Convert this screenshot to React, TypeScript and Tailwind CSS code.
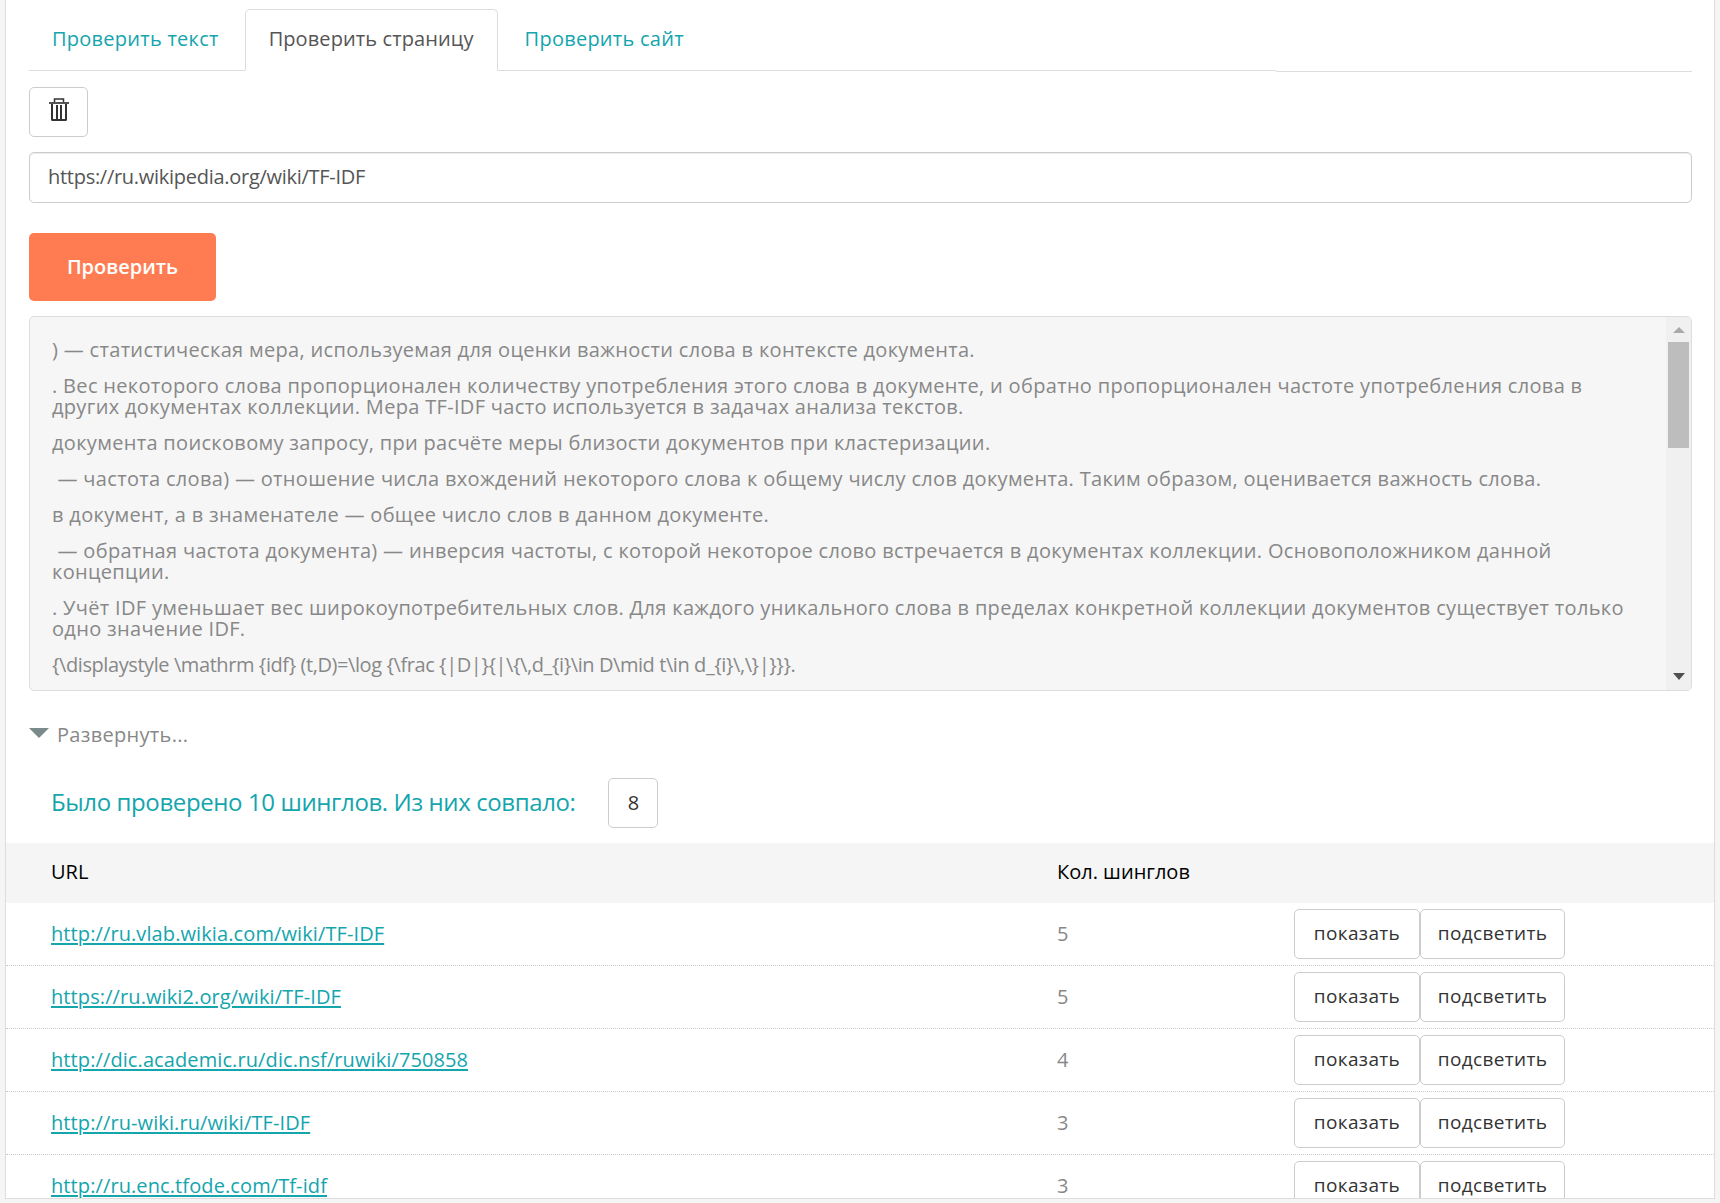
import React from 'react';

const font = "font-['Open_Sans','Liberation_Sans',sans-serif]";

const rows = [
  { url: 'http://ru.vlab.wikia.com/wiki/TF-IDF', count: 5 },
  { url: 'https://ru.wiki2.org/wiki/TF-IDF', count: 5 },
  { url: 'http://dic.academic.ru/dic.nsf/ruwiki/750858', count: 4 },
  { url: 'http://ru-wiki.ru/wiki/TF-IDF', count: 3 },
  { url: 'http://ru.enc.tfode.com/Tf-idf', count: 3 },
];

const paragraphs = [
  ') — статистическая мера, используемая для оценки важности слова в контексте документа.',
  '. Вес некоторого слова пропорционален количеству употребления этого слова в документе, и обратно пропорционален частоте употребления слова в других документах коллекции. Мера TF-IDF часто используется в задачах анализа текстов.',
  'документа поисковому запросу, при расчёте меры близости документов при кластеризации.',
  '\u00a0— частота слова) — отношение числа вхождений некоторого слова к общему числу слов документа. Таким образом, оценивается важность слова.',
  'в документ, а в знаменателе — общее число слов в данном документе.',
  '\u00a0— обратная частота документа) — инверсия частоты, с которой некоторое слово встречается в документах коллекции. Основоположником данной концепции.',
  '. Учёт IDF уменьшает вес широкоупотребительных слов. Для каждого уникального слова в пределах конкретной коллекции документов существует только одно значение IDF.',
];

const formula = '{\\displaystyle \\mathrm {idf} (t,D)=\\log {\\frac {|D|}{|\\{\\,d_{i}\\in D\\mid t\\in d_{i}\\,\\}|}}}.';

const TrashIcon = () => (
  <svg width="20" height="23" viewBox="0 0 20 23" fill="none" stroke="#333" strokeWidth="2">
    <path d="M0 5h20" stroke="#555" />
    <path d="M5.5 4V1h9v3" strokeWidth="1.5" />
    <path d="M3 6v15.5a.5.5 0 0 0 .5.5h13a.5.5 0 0 0 .5-.5V6" />
    <path d="M8 7v14M12 7v14" />
  </svg>
);

const Btn = ({ width, children }: { width: string; children: React.ReactNode }) => (
  <button className={`${width} h-[50px] rounded-[5px] border border-[#ccc] bg-white text-[19px] tracking-[0.35px] text-[#333]`}>
    {children}
  </button>
);

export default function App() {
  return (
    <div className={`${font} h-[1203px] overflow-hidden bg-[#f5f5f5]`}>
      <div className="ml-[5px] w-[1710px] h-[1199px] overflow-hidden bg-white border-x border-b border-[#ddd]">
        <div className="pl-[23px] pr-[22px] pt-[9px]">
          <div className="flex items-start">
            <div className="flex w-[1247px] h-[62px] border-b border-[#ddd] text-[20px] tracking-[0.25px]">
              <a className="pl-[23px] pr-[26px] pt-[15px] text-[#14a5ad]">Проверить текст</a>
              <a className="px-[23px] pt-[14px] h-[62px] tracking-[0.1px] text-[#555] bg-white border border-[#ddd] border-b-white rounded-t-[5px]">Проверить страницу</a>
              <a className="px-[27px] pt-[15px] text-[#14a5ad]">Проверить сайт</a>
            </div>
            <div className="flex-1 h-[63px] border-b border-[#ddd]" />
          </div>
          <button className="mt-[15px] w-[59px] h-[50px] flex items-center justify-center rounded-[5px] border border-[#ccc] bg-white pb-[6px]">
            <TrashIcon />
          </button>
          <div className="mt-[15px] h-[51px] flex items-center px-[18px] pb-[2px] rounded-[5px] border border-[#ccc] bg-white text-[20px] tracking-[-0.28px] text-[#555] shadow-[inset_0_1px_1px_rgba(0,0,0,0.08)]">
            https://ru.wikipedia.org/wiki/TF-IDF
          </div>
          <button className="mt-[30px] block w-[187px] h-[68px] rounded-[5px] bg-[#ff7b52] text-white text-[20px] font-semibold">
            Проверить
          </button>
          <div className="mt-[15px] h-[375px] flex rounded-[5px] border border-[#ddd] bg-[#f6f6f6] overflow-hidden">
            <div className="flex-1 min-w-0 pl-[22px] pr-[16px] pt-[22px] text-[20px] leading-[21px] tracking-[0.32px] text-[#888]">
              {paragraphs.map((p) => (
                <p key={p} className="mb-[15px]">{p}</p>
              ))}
              <p className="tracking-[-0.42px]">{formula}</p>
            </div>
            <div className="relative w-[25px] shrink-0 bg-[#f0f0f0] px-[2px]">
              <div className="absolute left-[7px] top-[10px] w-0 h-0 border-x-[6px] border-x-transparent border-b-[6px] border-b-[#aaa]" />
              <div className="mt-[25px] h-[106px] bg-[#bdbdbd]" />
              <div className="absolute left-[7px] bottom-[10px] w-0 h-0 border-x-[6px] border-x-transparent border-t-[7px] border-t-[#505050]" />
            </div>
          </div>
          <div className="mt-[32px] flex items-center h-[24px] text-[20px] tracking-[0.3px] text-[#888]">
            <div className="w-0 h-0 mb-[5px] border-x-[10px] border-x-transparent border-t-[10px] border-t-[#7a8a8a]" />
            <span className="ml-[8px]">Развернуть...</span>
          </div>
        </div>
        <div className="mt-[31px] flex items-center h-[50px] pl-[45px]">
          <span className="pb-[2px] text-[24px] tracking-[-0.39px] text-[#14a5ad]">Было проверено 10 шинглов. Из них совпало:</span>
          <div className="ml-[33px] w-[50px] h-[50px] flex items-center justify-center rounded-[5px] border border-[#ccc] text-[20px] text-[#333]">8</div>
        </div>
        <div className="mt-[15px] flex items-center h-[60px] pb-[2px] bg-[#f5f5f5] pl-[45px] text-[20px] font-medium text-black">
          <div className="w-[1006px]">URL</div>
          <div>Кол. шинглов</div>
        </div>
        {rows.map((r) => (
          <div key={r.url} className="flex items-center h-[63px] border-b border-dotted border-[#ccc] pl-[45px] pb-[1px]">
            <a className="w-[1006px] text-[20px] tracking-[0.1px] text-[#14a5ad] underline decoration-2 underline-offset-[2px]">{r.url}</a>
            <div className="w-[237px] text-[20px] text-[#888]">{r.count}</div>
            <div className="flex">
              <Btn width="w-[126px]">показать</Btn>
              <Btn width="w-[145px]">подсветить</Btn>
            </div>
          </div>
        ))}
      </div>
    </div>
  );
}
